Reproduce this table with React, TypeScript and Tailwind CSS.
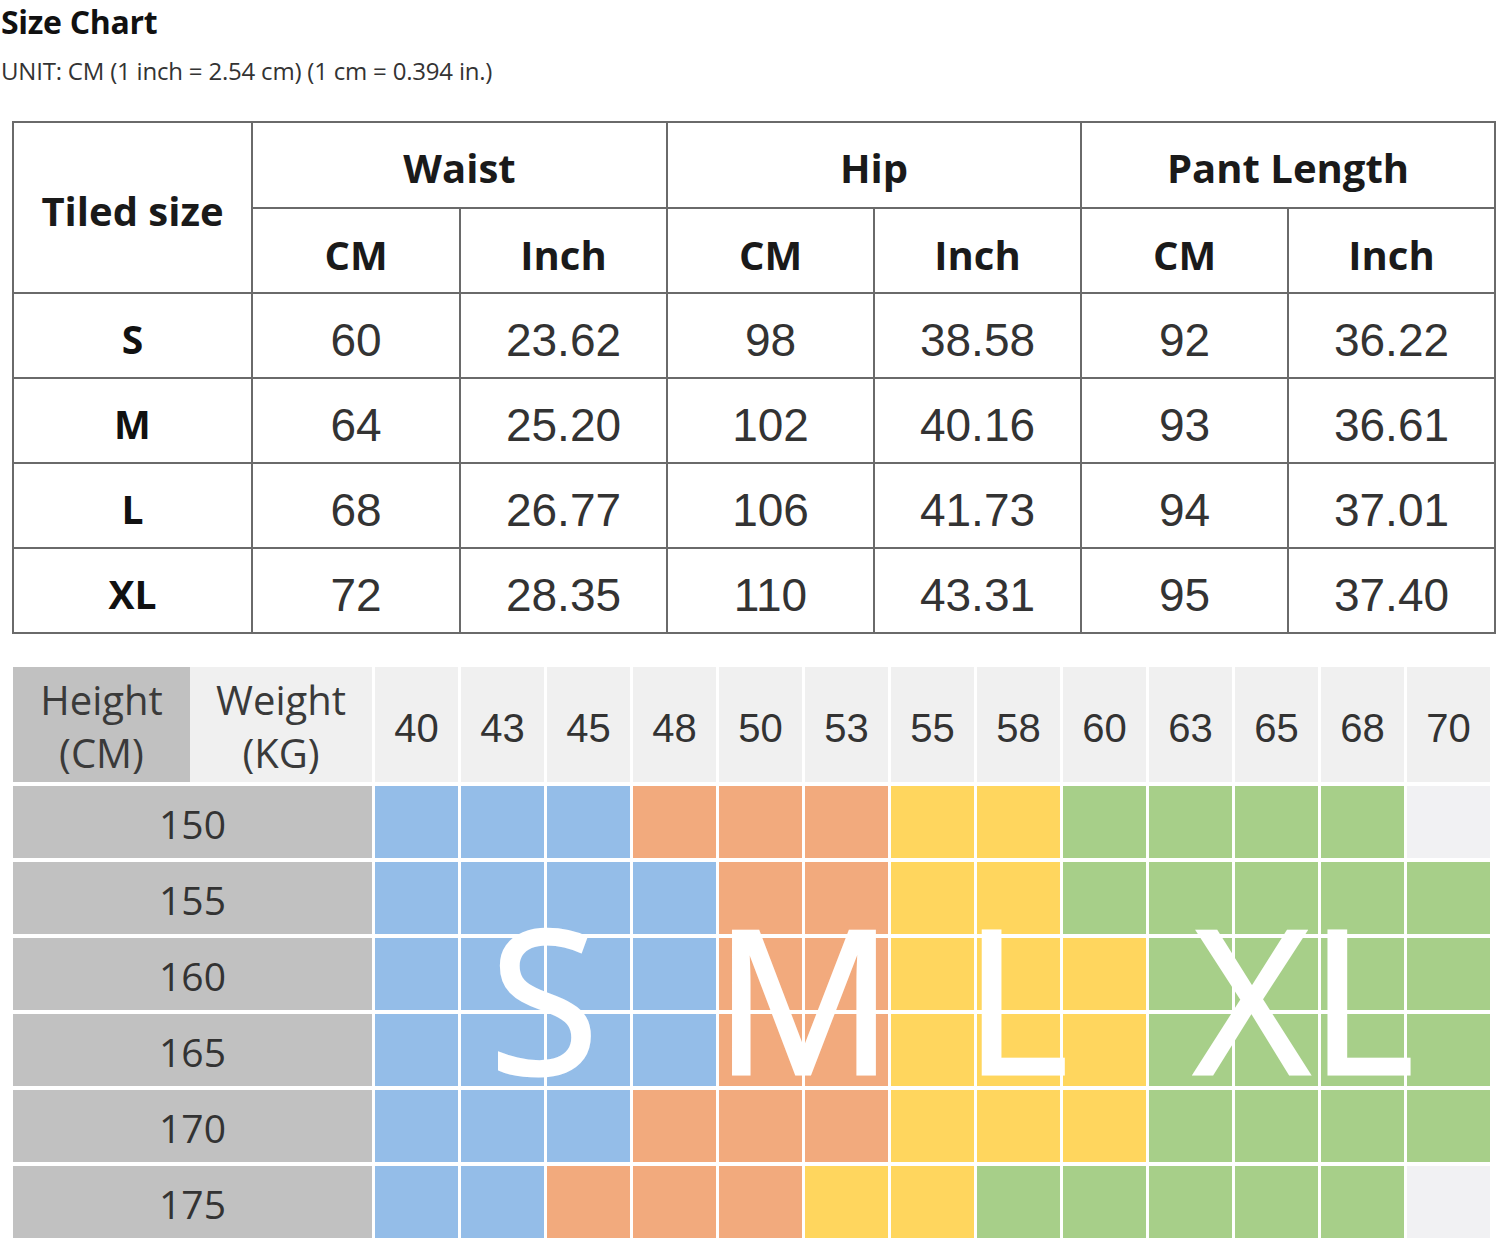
import React from "react";

const B = "bg-[#94bde8]";
const O = "bg-[#f2aa7d]";
const Y = "bg-[#ffd65e]";
const G = "bg-[#a7cf89]";
const E = "bg-[#f1f1f3]";

const weights = ["40", "43", "45", "48", "50", "53", "55", "58", "60", "63", "65", "68", "70"];

const grid: { h: string; cells: string[] }[] = [
  { h: "150", cells: [B, B, B, O, O, O, Y, Y, G, G, G, G, E] },
  { h: "155", cells: [B, B, B, B, O, O, Y, Y, G, G, G, G, G] },
  { h: "160", cells: [B, B, B, B, O, O, Y, Y, Y, G, G, G, G] },
  { h: "165", cells: [B, B, B, B, O, O, Y, Y, Y, G, G, G, G] },
  { h: "170", cells: [B, B, B, O, O, O, Y, Y, Y, G, G, G, G] },
  { h: "175", cells: [B, B, O, O, O, Y, Y, G, G, G, G, G, E] },
];

const rows = [
  ["S", "60", "23.62", "98", "38.58", "92", "36.22"],
  ["M", "64", "25.20", "102", "40.16", "93", "36.61"],
  ["L", "68", "26.77", "106", "41.73", "94", "37.01"],
  ["XL", "72", "28.35", "110", "43.31", "95", "37.40"],
];

const headFont = { fontFamily: '"Open Sans", "Noto Sans", sans-serif' };
const numFont = { fontFamily: '"Liberation Sans", Arial, sans-serif' };

export default function App() {
  return (
    <div className="w-[1500px] h-[1245px] bg-white overflow-hidden text-[#222]">
      <div className="pl-[1px] pt-[2px]" style={headFont}>
        <div className="text-[32px] font-bold leading-[40px] text-[#111] tracking-[-0.3px]">Size Chart</div>
        <div className="mt-[14px] text-[24px] leading-[30px] text-[#333] tracking-[-0.2px]">
          UNIT: CM (1 inch = 2.54 cm) (1 cm = 0.394 in.)
        </div>
      </div>

      <table className="ml-[12px] mt-[35px] border-collapse table-fixed w-[1482px]">
        <colgroup>
          <col className="w-[239px]" />
          <col className="w-[208px]" />
          <col className="w-[207px]" />
          <col className="w-[207px]" />
          <col className="w-[207px]" />
          <col className="w-[207px]" />
          <col className="w-[207px]" />
        </colgroup>
        <tbody>
          <tr className="h-[86px]">
            <td rowSpan={2} className="border-2 border-[#6a6a6a] text-center text-[40px] font-bold text-[#1a1a1a] pt-[6px]" style={headFont}>
              Tiled size
            </td>
            <td colSpan={2} className="border-2 border-[#6a6a6a] text-center text-[40px] font-bold text-[#1a1a1a] pt-[6px]" style={headFont}>
              Waist
            </td>
            <td colSpan={2} className="border-2 border-[#6a6a6a] text-center text-[40px] font-bold text-[#1a1a1a] pt-[6px]" style={headFont}>
              Hip
            </td>
            <td colSpan={2} className="border-2 border-[#6a6a6a] text-center text-[40px] font-bold text-[#1a1a1a] pt-[6px]" style={headFont}>
              Pant Length
            </td>
          </tr>
          <tr className="h-[85px]">
            {["CM", "Inch", "CM", "Inch", "CM", "Inch"].map((t, i) => (
              <td key={i} className="border-2 border-[#6a6a6a] text-center text-[40px] font-bold text-[#1a1a1a] pt-[8px]" style={headFont}>
                {t}
              </td>
            ))}
          </tr>
          {rows.map((r) => (
            <tr key={r[0]} className="h-[85px]">
              <td className="border-2 border-[#6a6a6a] text-center text-[39px] font-bold text-[#111] pt-[8px]" style={headFont}>
                {r[0]}
              </td>
              {r.slice(1).map((v, i) => (
                <td key={i} className="border-2 border-[#6a6a6a] text-center text-[46px] text-[#333] pt-[10px]" style={numFont}>
                  {v}
                </td>
              ))}
            </tr>
          ))}
        </tbody>
      </table>

      <div className="relative ml-[13px] mt-[33px] w-[1480px]">
        <div className="grid grid-cols-[359px_repeat(13,83px)] gap-x-[3px] gap-y-[4px]">
          <div className="flex h-[115px]" style={headFont}>
            <div className="w-[177px] bg-[#c1c1c1] flex flex-col items-center justify-center text-[40px] leading-[53px] text-[#3a3a3a] pt-[2px]">
              <span>Height</span>
              <span>(CM)</span>
            </div>
            <div className="w-[182px] bg-[#f0f0f0] flex flex-col items-center justify-center text-[40px] leading-[53px] text-[#3a3a3a] pt-[2px]">
              <span>Weight</span>
              <span>(KG)</span>
            </div>
          </div>
          {weights.map((w) => (
            <div key={w} className="h-[115px] bg-[#f0f0f0] flex items-center justify-center text-[40px] text-[#333] pt-[6px]" style={numFont}>
              {w}
            </div>
          ))}
          {grid.map((row) => (
            <React.Fragment key={row.h}>
              <div className="h-[72px] bg-[#c1c1c1] flex items-center justify-center text-[39px] text-[#333] pt-[4px]" style={headFont}>
                {row.h}
              </div>
              {row.cells.map((c, i) => (
                <div key={i} className={`h-[72px] ${c}`} />
              ))}
            </React.Fragment>
          ))}
        </div>

        <div className="absolute inset-0 pointer-events-none text-white text-[200px] leading-none [-webkit-text-stroke:3px_#ffffff]" style={headFont}>
          <div className="absolute top-[230px] left-[381px] w-[300px] text-center">S</div>
          <div className="absolute top-[230px] left-[641px] w-[300px] text-center">M</div>
          <div className="absolute top-[230px] left-[853px] w-[300px] text-center">L</div>
          <div className="absolute top-[230px] left-[1141px] w-[300px] text-center">XL</div>
        </div>
      </div>
    </div>
  );
}
